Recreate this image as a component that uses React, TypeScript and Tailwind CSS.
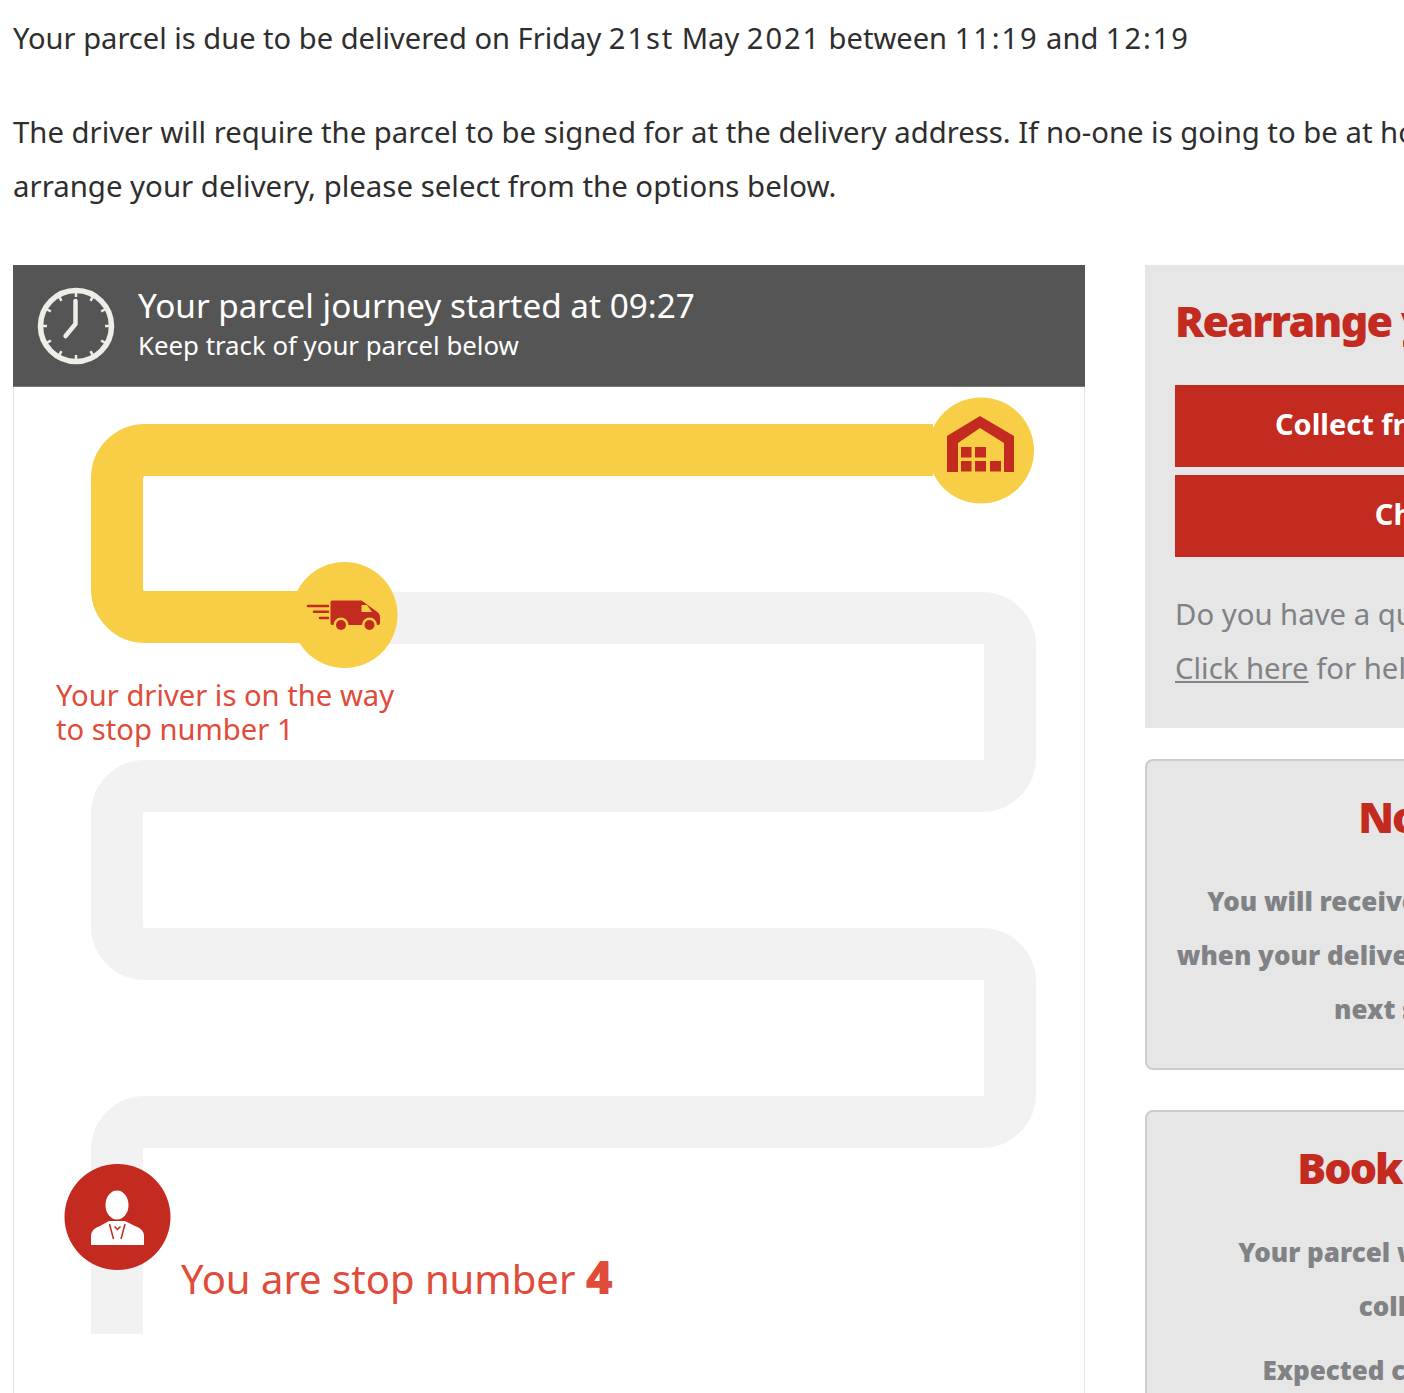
const FONT = "font-['Noto_Sans',sans-serif]";

const ClockIcon = () => (
  <svg width="78" height="78" viewBox="0 0 78 78" className="shrink-0">
    <circle cx="39" cy="39" r="35.500" fill="none" stroke="#efede8" strokeWidth="5.500" />
    {[0, 30, 60, 90, 120, 150, 180, 210, 240, 270, 300, 330].map((a) => (
      <line key={a} x1="39" y1="5" x2="39" y2="10" stroke="#efede8" strokeWidth="2.500" transform={`rotate(${a} 39 39)`} />
    ))}
    <path d="M38.500 14V37L28.500 49" fill="none" stroke="#efede8" strokeWidth="4.500" strokeLinecap="round" strokeLinejoin="round" />
  </svg>
);

const track = {
  yellow: 'M933 450H145A28 28 0 0 0 117 478V589A28 28 0 0 0 145 617H344',
  grey: 'M344 618H982A28 28 0 0 1 1010 646V758A28 28 0 0 1 982 786H145A28 28 0 0 0 117 814V926A28 28 0 0 0 145 954H982A28 28 0 0 1 1010 982V1094A28 28 0 0 1 982 1122H145A28 28 0 0 0 117 1150V1334',
};

const Journey = () => (
  <svg width="1072" height="1006" viewBox="13 387 1072 1006" className="absolute -left-px top-0">
    <path d={track.grey} fill="none" stroke="#f2f2f2" strokeWidth="52" />
    <path d={track.yellow} fill="none" stroke="#f7ce46" strokeWidth="52" />

    <circle cx="981" cy="450.500" r="53" fill="#f7ce46" />
    <path d="M947 472V436L980 416L1014 436V472H1004V443L980 428L958 443V472Z" fill="#c32a20" />
    <path
      d="M961 447h10.500v10.500H961ZM975 447h11v10.500h-11ZM961 461h10.500v10.500H961ZM975 461h11v10.500h-11ZM990 461h11v10.500h-11Z"
      fill="#c32a20"
    />

    <circle cx="344.500" cy="615" r="53" fill="#f7ce46" />
    <path
      d="M332 600.500H361.500L378 612.500Q380 614 380 617V623Q380 625 378 625H332Q330.500 625 330.500 623V602Q330.500 600.500 332 600.500Z"
      fill="#c32a20"
    />
    <path d="M361.500 605H367L372 612H361.500Z" fill="#f7ce46" />
    <circle cx="341" cy="625" r="7.500" fill="#f7ce46" />
    <circle cx="341" cy="625" r="5" fill="#c32a20" />
    <circle cx="369.500" cy="625" r="7.500" fill="#f7ce46" />
    <circle cx="369.500" cy="625" r="5" fill="#c32a20" />
    <path d="M308 606H328M314 611.700H328M320 618H328" stroke="#c32a20" strokeWidth="2.500" strokeLinecap="round" />

    <circle cx="117.500" cy="1217" r="53" fill="#c32a20" />
    <ellipse cx="117" cy="1205" rx="11.500" ry="14.500" fill="#fff" />
    <path d="M91 1245V1236Q91 1229 100 1226L109 1221H125L135 1226Q144 1229 144 1236V1245Z" fill="#fff" />
    <path d="M109.500 1224L113.500 1239M125 1224L121 1239M114.500 1226.500L117.500 1229.500L120.500 1226.500" stroke="#c32a20" strokeWidth="1.500" fill="none" />
  </svg>
);

const InfoPanel = ({
  title,
  lines,
  footer,
  className,
}: {
  title: string;
  lines: string[];
  footer?: string;
  className: string;
}) => (
  <div className={`rounded-lg border-2 border-[#cccccc] bg-[#e6e6e7] text-center ${className}`}>
    <h2 className="mt-[26px] text-[43px] leading-[60px] font-black tracking-[-2px] text-[#c32a20]">{title}</h2>
    <div className="mt-[27px] text-[26px] leading-[54px] font-black whitespace-nowrap text-[#808285]">
      {lines.map((line) => (
        <p key={line}>{line}</p>
      ))}
      {footer && <p className="mt-[10px]">{footer}</p>}
    </div>
  </div>
);

// the digits sit wider in the reference than in this font
const Num = ({ children }: { children: string }) => <span className="tracking-[1.900px]">{children}</span>;

export default function App() {
  return (
    <div className={`h-[1393px] w-[1404px] overflow-hidden bg-white text-[#2e2e2e] ${FONT}`}>
      <div className="w-[1800px] pl-[13px]">
        <p className="h-[105px] pt-[11px] text-[29.100px] leading-[54px] whitespace-nowrap">
          Your parcel is due to be delivered on Friday <Num>21st</Num> May <Num>2021</Num> between <Num>11:19</Num> and{' '}
          <Num>12:19</Num>
        </p>
        <p className="text-[29.300px] leading-[54px] whitespace-nowrap">
          The driver will require the parcel to be signed for at the delivery address. If no-one is going to be at home to
        </p>
        <p className="text-[29.400px] leading-[54px] whitespace-nowrap">
          arrange your delivery, please select from the options below.
        </p>

        <div className="mt-[52px] flex gap-[60px]">
          <div className="w-[1072px] shrink-0">
            <div className="flex h-[122px] items-center gap-[23px] border-b border-[#777] bg-[#555555] pl-[24px] text-white">
              <ClockIcon />
              <div className="-mt-[5px]">
                <p className="text-[33.300px] leading-[44px]">Your parcel journey started at 09:27</p>
                <p className="text-[25.800px] leading-[36px]">Keep track of your parcel below</p>
              </div>
            </div>
            <div className="relative h-[1006px] border-x border-[#e3e3e3]">
              <Journey />
              <p className="absolute top-[291px] left-[42px] text-[29.200px] leading-[34px] text-[#e04b3a]">
                Your driver is on the way
                <br />
                to stop number 1
              </p>
              <p className="absolute top-[859px] left-[167px] text-[40px] leading-[60px] whitespace-nowrap text-[#e04b3a]">
                You are stop number <span className="text-[46px] font-black">4</span>
              </p>
            </div>
          </div>

          <div className="w-[650px] shrink-0">
            <div className="h-[463px] bg-[#e6e6e7] px-[30px] pt-[26px]">
              <h2 className="text-[43px] leading-[60px] font-black tracking-[-1.700px] whitespace-nowrap text-[#c32a20]">
                Rearrange your delivery
              </h2>
              <button className="mt-[34px] block h-[82px] w-full bg-[#c32a20] pb-[4px] text-[29px] font-bold text-white">
                Collect from a pickup point
              </button>
              <button className="mt-[8px] block h-[82px] w-full bg-[#c32a20] pb-[4px] text-[29px] font-bold text-white">
                Choose a day
              </button>
              <p className="mt-[30px] text-[29.300px] leading-[54px] text-[#808285]">Do you have a question?</p>
              <p className="text-[29.300px] leading-[54px] text-[#808285]">
                <span className="underline">Click here</span> for help
              </p>
            </div>
            <InfoPanel
              className="mt-[31px] h-[311px]"
              title="Not home?"
              lines={['You will receive a text or an email alert', 'when your delivery is on the way, plus their', 'next steps you take.']}
            />
            <InfoPanel
              className="mt-[40px] h-[400px]"
              title="Book a collection"
              lines={['Your parcel will be booked in, for a', 'collection today.']}
              footer="Expected collection date: 22/05"
            />
          </div>
        </div>
      </div>
    </div>
  );
}
